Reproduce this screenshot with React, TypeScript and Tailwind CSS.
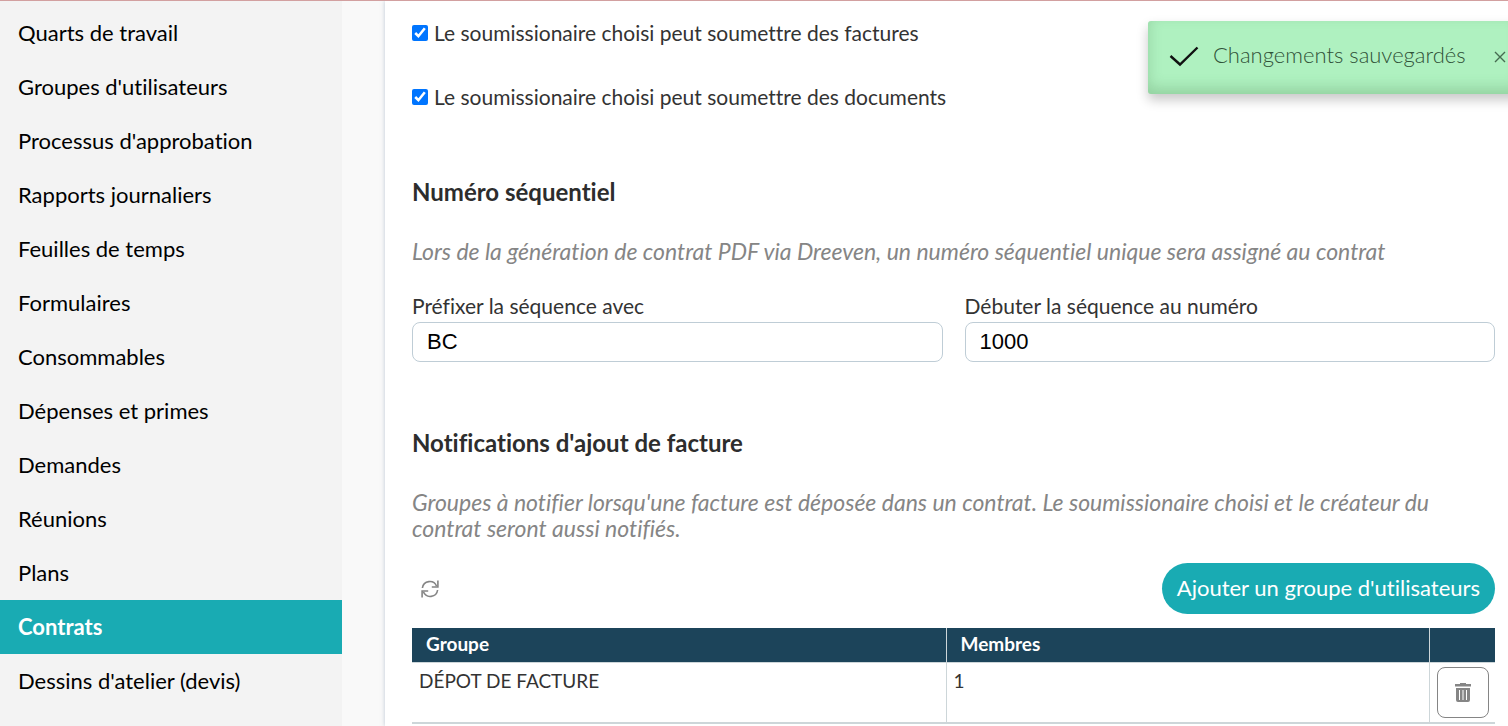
import { useState } from 'react'

const menu = [
  'Quarts de travail',
  "Groupes d'utilisateurs",
  "Processus d'approbation",
  'Rapports journaliers',
  'Feuilles de temps',
  'Formulaires',
  'Consommables',
  'Dépenses et primes',
  'Demandes',
  'Réunions',
  'Plans',
  'Contrats',
  "Dessins d'atelier (devis)",
]

const groups = [{ name: 'DÉPOT DE FACTURE', members: 1 }]

function Sidebar() {
  return (
    <nav className="w-[342px] shrink-0 bg-[#f3f3f3] pt-[5px]">
      <ul>
        {menu.map((item) => (
          <li key={item}>
            <a
              href="#"
              className={
                item === 'Contrats'
                  ? 'flex h-[54px] items-center bg-[#19abb3] px-[18px] font-bold text-white'
                  : 'flex h-[54px] items-center px-[18px] text-black'
              }
            >
              {item}
            </a>
          </li>
        ))}
      </ul>
    </nav>
  )
}

function CheckRow({ label }: { label: string }) {
  return (
    <label className="flex h-[26px] items-center gap-1.5 text-[21px]">
      <input type="checkbox" defaultChecked className="size-4 shrink-0 accent-[#0075ff]" />
      {label}
    </label>
  )
}

function Field({ id, label, value }: { id: string; label: string; value: string }) {
  return (
    <div>
      <label htmlFor={id} className="block text-[21px] leading-[26px]">
        {label}
      </label>
      <input
        id={id}
        defaultValue={value}
        className="mt-[3px] block h-10 w-full rounded-lg border border-[#bfcdd6] bg-white px-3.5 font-['Liberation_Sans',sans-serif] text-[22px] text-black"
      />
    </div>
  )
}

function Toast({ onClose }: { onClose: () => void }) {
  return (
    <div
      role="status"
      className="absolute top-5 -right-3 flex h-[73px] w-[372px] items-center rounded-[3px] bg-[#aff1c0] pb-1.5 pl-5 shadow-[inset_0_-6px_14px_rgba(60,110,60,0.24),0_6px_12px_rgba(0,0,0,0.22)]"
    >
      <svg viewBox="0 0 32 24" className="h-6 w-8 shrink-0" fill="none" stroke="#111" strokeWidth="2.4">
        <path d="M2.5 13 L12 21.5 L29.5 4.5" />
      </svg>
      <span className="ml-[13px] font-light text-[#2f5238]">Changements sauvegardés</span>
      <button type="button" aria-label="Fermer" onClick={onClose} className="ml-[27px]">
        <svg viewBox="0 0 14 14" className="mt-1 size-3.5" fill="none" stroke="#466b50" strokeWidth="1.4">
          <path d="M2 2 L12 12 M12 2 L2 12" />
        </svg>
      </button>
    </div>
  )
}

function RefreshIcon() {
  return (
    <svg viewBox="0 0 18 18" className="size-[18px]" fill="none" stroke="#858585" strokeWidth="1.6">
      <path d="M1.4 8 A7.4 7.4 0 0 1 15.6 6.2 M16.6 10 A7.4 7.4 0 0 1 2.4 11.8" />
      <path d="M16.9 0.6 V7 H10.8 M1.1 17.4 V11 H7.2" />
    </svg>
  )
}

function TrashIcon() {
  return (
    <svg viewBox="0 0 16 20" className="h-5 w-4" fill="#858585">
      <path d="M5 1 V0 H11 V1 H16 V3.5 H0 V1 Z" />
      <path
        fillRule="evenodd"
        d="M1 5 H15 V17 Q15 19 13 19 H3 Q1 19 1 17 Z M4 7 V17 H5 V7 Z M7.5 7 V17 H8.5 V7 Z M11 7 V17 H12 V7 Z"
      />
    </svg>
  )
}

export default function App() {
  const [toast, setToast] = useState(true)
  return (
    <div className="relative flex h-screen overflow-hidden border-t border-[#d2a0a0] bg-[#f9f9f9] font-['Lato',sans-serif] text-[22px] leading-[26px] text-[#333] [font-variant-ligatures:none]">
      <Sidebar />
      <main className="ml-[43px] min-w-0 flex-1 bg-white pr-[13px] pl-[27px] pt-[19px] shadow-[0_0_4px_rgba(130,150,175,0.5)]">
        <div className="flex flex-col gap-[38px]">
          <CheckRow label="Le soumissionaire choisi peut soumettre des factures" />
          <CheckRow label="Le soumissionaire choisi peut soumettre des documents" />
        </div>

        <section className="mt-[69px]">
          <h2 className="text-2xl leading-[26px] font-bold text-[#2d2d2d]">Numéro séquentiel</h2>
          <p className="mt-[33px] text-[23px] leading-[26px] text-[#858585] italic">
            Lors de la génération de contrat PDF via Dreeven, un numéro séquentiel unique sera assigné au contrat
          </p>
          <div className="mt-[29px] grid grid-cols-2 gap-[22px]">
            <Field id="prefix" label="Préfixer la séquence avec" value="BC" />
            <Field id="start" label="Débuter la séquence au numéro" value="1000" />
          </div>
        </section>

        <section className="mt-[68px]">
          <h2 className="text-2xl leading-[26px] font-bold text-[#2d2d2d]">Notifications d'ajout de facture</h2>
          <p className="mt-[33px] text-[23px] leading-[26px] text-[#858585] italic">
            Groupes à notifier lorsqu'une facture est déposée dans un contrat. Le soumissionaire choisi et le créateur
            du contrat seront aussi notifiés.
          </p>
          <div className="mt-[22px] flex items-center justify-between">
            <button type="button" aria-label="Actualiser" className="ml-[9px]">
              <RefreshIcon />
            </button>
            <button type="button" className="h-[51px] rounded-full bg-[#19abb3] px-[15px] pb-px text-white">
              Ajouter un groupe d'utilisateurs
            </button>
          </div>
          <table className="mt-3.5 w-full table-fixed border-collapse text-left">
            <colgroup>
              <col />
              <col className="w-[483px]" />
              <col className="w-[66px]" />
            </colgroup>
            <thead>
              <tr className="h-[34px] bg-[#1c445a] text-[19px] leading-6 text-white">
                <th className="px-3.5 pb-0.5 font-bold">Groupe</th>
                <th className="border-l border-[#cdd6d9] px-3.5 pb-0.5 font-bold">Membres</th>
                <th className="border-l border-[#cdd6d9]" aria-label="Actions" />
              </tr>
            </thead>
            <tbody>
              {groups.map((g) => (
                <tr key={g.name} className="h-[61px] border-t border-b-2 border-[#cdd6d9] align-top text-[19px]">
                  <td className="px-[7px] pt-[5px]">{g.name}</td>
                  <td className="border-l border-[#cdd6d9] px-[7px] pt-[5px]">{g.members}</td>
                  <td className="border-l border-[#cdd6d9] pt-1 pr-1.5 pl-[7px]">
                    <button
                      type="button"
                      aria-label="Supprimer"
                      className="flex h-[51px] w-full items-center justify-center rounded-lg border border-[#858585] bg-white pt-0.5"
                    >
                      <TrashIcon />
                    </button>
                  </td>
                </tr>
              ))}
            </tbody>
          </table>
        </section>
      </main>
      {toast && <Toast onClose={() => setToast(false)} />}
    </div>
  )
}
